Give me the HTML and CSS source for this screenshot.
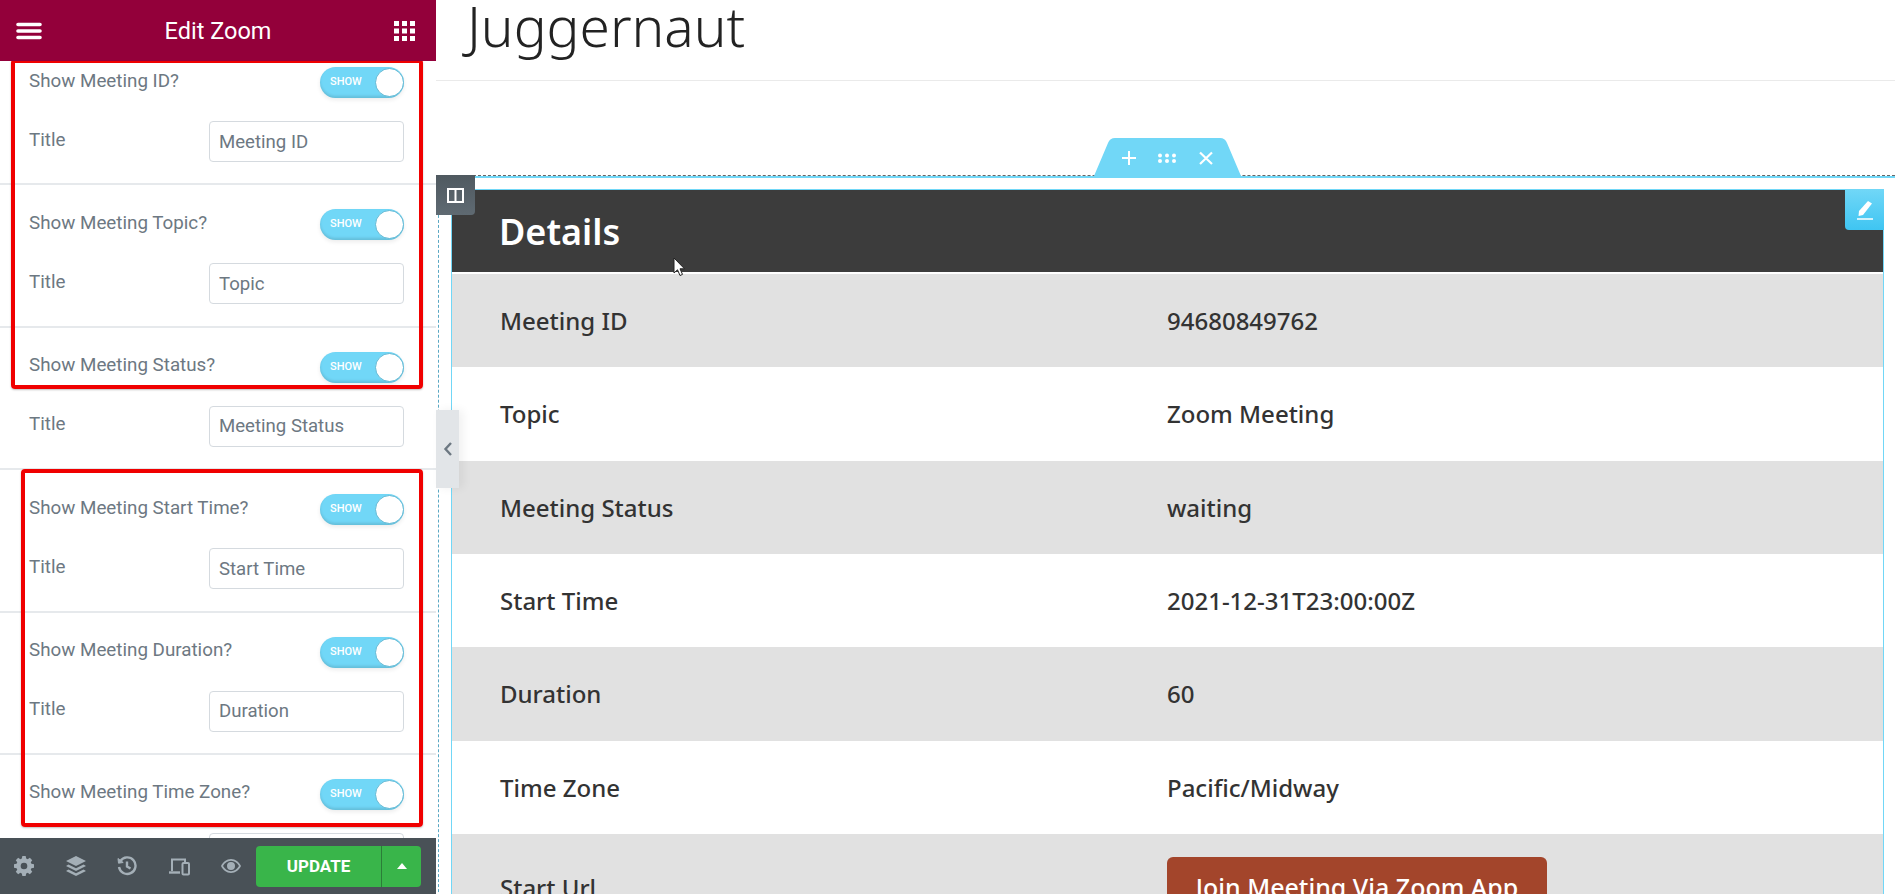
FILE: index.html
```html
<!DOCTYPE html>
<html>
<head>
  <title>Edit Zoom</title>
  <link rel="stylesheet" href="styles.css">
</head>
<body>
  <div class="app">
    <aside class="panel">
      <header class="panel-head">
        <svg class="head-icon" width="26" height="18" viewBox="0 0 26 18"><path d="M2 2.500H24M2 9H24M2 15.500H24" stroke="#fff" stroke-width="3.600" stroke-linecap="round"/></svg>
        <span class="panel-title">Edit Zoom</span>
        <svg class="head-icon" width="21" height="20" viewBox="0 0 21 20" fill="#fff"><path d="M0 0h5v5H0zM8 0h5v5H8zM16 0h5v5h-5zM0 7.500h5v5H0zM8 7.500h5v5H8zM16 7.500h5v5h-5zM0 15h5v5H0zM8 15h5v5H8zM16 15h5v5h-5z"/></svg>
      </header>

      <div class="panel-body">
        <div class="control-list">
          <section class="control">
            <div class="control-row"><span>Show Meeting ID?</span><span class="toggle">SHOW</span></div>
            <div class="control-row title-row"><span>Title</span><input class="text-input" value="Meeting ID"></div>
          </section>
          <section class="control">
            <div class="control-row"><span>Show Meeting Topic?</span><span class="toggle">SHOW</span></div>
            <div class="control-row title-row"><span>Title</span><input class="text-input" value="Topic"></div>
          </section>
          <section class="control">
            <div class="control-row"><span>Show Meeting Status?</span><span class="toggle">SHOW</span></div>
            <div class="control-row title-row"><span>Title</span><input class="text-input" value="Meeting Status"></div>
          </section>
          <section class="control">
            <div class="control-row"><span>Show Meeting Start Time?</span><span class="toggle">SHOW</span></div>
            <div class="control-row title-row"><span>Title</span><input class="text-input" value="Start Time"></div>
          </section>
          <section class="control">
            <div class="control-row"><span>Show Meeting Duration?</span><span class="toggle">SHOW</span></div>
            <div class="control-row title-row"><span>Title</span><input class="text-input" value="Duration"></div>
          </section>
          <section class="control">
            <div class="control-row"><span>Show Meeting Time Zone?</span><span class="toggle">SHOW</span></div>
            <div class="control-row title-row"><span>Title</span><input class="text-input" value=""></div>
          </section>
        </div>
        <div class="red-box red-box-one"></div>
        <div class="red-box red-box-two"></div>
      </div>

      <footer class="panel-foot">
        <div class="foot-icons">
          <svg width="20" height="20" viewBox="0 0 24 24" fill="#a4afb7"><path fill-rule="evenodd" d="M10 1h4l.6 3.100 1.800.8L19 3.100 21.900 6l-1.800 2.600.8 1.800L24 11v4l-3.100.6-.8 1.800 1.800 2.600L19 22.900l-2.600-1.800-1.800.8L14 25h-4l-.6-3.100-1.800-.8L5 22.900 2.100 20l1.800-2.600-.8-1.800L0 15v-4l3.100-.6.800-1.800L2.100 6 5 3.100l2.600 1.800 1.800-.8zM12 9a4 4 0 1 0 0 8 4 4 0 0 0 0-8z" transform="translate(0 -1)"/></svg>
          <svg width="20" height="20" viewBox="0 0 20 20" fill="#a4afb7"><path d="M10 0l10 5-10 5L0 5zM2.500 8.500L10 12.200l7.500-3.700L20 10l-10 5L0 10zM2.500 13.500L10 17.200l7.500-3.700L20 15l-10 5L0 15z"/></svg>
          <svg width="20" height="20" viewBox="0 0 20 20" fill="none" stroke="#a4afb7" stroke-width="2.400"><path d="M3.300 5A8.300 8.300 0 1 1 2 11"/><path d="M10 5.500V10.500L13.500 12.500"/><path d="M1 2.500L1.500 7.200L6.200 6.500z" fill="#a4afb7" stroke-width="1"/></svg>
          <svg width="21" height="19" viewBox="0 0 21 19" fill="none" stroke="#a4afb7" stroke-width="2"><path d="M3 14V2.500H16V5"/><path d="M0 15.500H11" stroke-width="2.400"/><rect x="13.500" y="6" width="6.500" height="11.500" rx="1"/></svg>
          <svg width="20" height="14" viewBox="0 0 20 14" fill="#a4afb7"><path fill-rule="evenodd" d="M10 0c4.500 0 8 3 10 7-2 4-5.500 7-10 7S2 11 0 7c2-4 5.500-7 10-7zM10 1.800C6.500 1.800 3.800 4 2 7c1.800 3 4.500 5.200 8 5.200S16.200 10 18 7c-1.800-3-4.500-5.200-8-5.200zM10 3a4 4 0 1 1 0 8 4 4 0 0 1 0-8z"/></svg>
        </div>
        <div class="update-group">
          <button class="update-btn">UPDATE</button>
          <button class="update-more"><span class="caret"></span></button>
        </div>
      </footer>
    </aside>

    <main class="preview">
      <div class="page-title"><h1>Juggernaut</h1></div>

      <div class="section">
        <div class="section-inner">
          <div class="widget">
            <h2 class="details-head">Details</h2>
            <div class="details-row"><span>Meeting ID</span><span>94680849762</span></div>
            <div class="details-row"><span>Topic</span><span>Zoom Meeting</span></div>
            <div class="details-row"><span>Meeting Status</span><span>waiting</span></div>
            <div class="details-row"><span>Start Time</span><span>2021-12-31T23:00:00Z</span></div>
            <div class="details-row"><span>Duration</span><span>60</span></div>
            <div class="details-row"><span>Time Zone</span><span>Pacific/Midway</span></div>
            <div class="details-row last-row"><span>Start Url</span><span><a class="join-btn">Join Meeting Via Zoom App</a></span></div>
          </div>
        </div>
      </div>

      <div class="section-tab">
        <svg class="tab-shape" width="147" height="38" viewBox="0 0 147 38"><path d="M0 38L14 5Q16 0 21 0H126Q131 0 133 5L147 38z" fill="#71d7f7"/></svg>
        <svg class="tab-icons" width="92" height="16" viewBox="0 0 92 16" stroke="#fff" stroke-width="2" fill="#fff"><path d="M1 8H15M8 1V15"/><g stroke="none"><circle cx="39" cy="5.500" r="2"/><circle cx="46" cy="5.500" r="2"/><circle cx="53" cy="5.500" r="2"/><circle cx="39" cy="11" r="2"/><circle cx="46" cy="11" r="2"/><circle cx="53" cy="11" r="2"/></g><path d="M79 2.500L91 14M91 2.500L79 14" stroke-width="2.200"/></svg>
      </div>

      <div class="column-handle">
        <svg width="17" height="15" viewBox="0 0 17 15" fill="none" stroke="#fff" stroke-width="2"><rect x="1" y="1" width="15" height="13"/><path d="M8.500 1V14"/></svg>
      </div>

      <div class="edit-handle">
        <svg width="18" height="20" viewBox="0 0 18 20" fill="#fff"><path d="M12 1L16 3.500 7 15 2.500 16 3 11z"/><path d="M1 19H17" stroke="#fff" stroke-width="1.500"/></svg>
      </div>

      <div class="collapse-tab">
        <svg width="10" height="16" viewBox="0 0 10 16" fill="none" stroke="#6d7882" stroke-width="2.400"><path d="M8 2L2.500 8L8 14"/></svg>
      </div>

      <svg class="cursor" width="13" height="20" viewBox="0 0 13 20"><path d="M1 1V16L4.500 12.800L7 18.500L9.500 17.400L7 11.800H11.500z" fill="#fff" stroke="#222" stroke-width="1"/></svg>
    </main>
  </div>
</body>
</html>
```

FILE: styles.css
```css
html, body {
  margin: 0;
  height: 100%;
  overflow: hidden;
  background: #fff;
}

.app {
  display: flex;
  height: 894px;
  overflow: hidden;
}

/* left panel */
.panel {
  width: 436px;
  flex-shrink: 0;
  display: flex;
  flex-direction: column;
  font-family: Roboto, sans-serif;
  color: #6d7882;
  background: #fff;
}

.panel-head {
  height: 61px;
  flex-shrink: 0;
  display: flex;
  align-items: center;
  justify-content: space-between;
  padding: 0 21px 0 16px;
  background: #93003a;
}

.head-icon {
  display: block;
}

.panel-title {
  color: #fff;
  font-size: 23.500px;
}

.panel-body {
  flex: 1;
  position: relative;
  overflow: hidden;
}

.control-list {
  margin-top: -18px;
}

.control {
  height: 142.4px;
  box-sizing: border-box;
  padding: 24px 32px 0 29px;
  border-bottom: 2px solid #e6e9ec;
}

.control-row {
  display: flex;
  align-items: center;
  justify-content: space-between;
  height: 31px;
  font-size: 18.800px;
}

.control-row > span:first-child {
  position: relative;
  top: -2px;
}

.title-row {
  height: 41px;
  margin-top: 23px;
}

.toggle {
  width: 84px;
  height: 31px;
  box-sizing: border-box;
  position: relative;
  display: block;
  padding-left: 10px;
  border-radius: 16px;
  background: #71d7f7;
  box-shadow: inset 0 -2px 3px rgba(0,0,0,0.12), 0 2px 4px rgba(0,0,0,0.08);
  color: #fff;
  font-size: 11px;
  font-weight: 500;
  line-height: 30px;
}

.toggle::after {
  content: "";
  position: absolute;
  top: 1px;
  right: 0;
  width: 27px;
  height: 27px;
  border: 1px solid #5fb8d4;
  border-radius: 50%;
  background: #fff;
}

.text-input {
  width: 195px;
  height: 41px;
  box-sizing: border-box;
  padding: 0 9px;
  border: 1px solid #d5dadf;
  border-radius: 4px;
  outline: none;
  background: #fff;
  color: #6d7882;
  font-family: Roboto, sans-serif;
  font-size: 18.600px;
}

.red-box {
  position: absolute;
  box-sizing: border-box;
  border: 4px solid #f00000;
  border-radius: 4px;
  box-shadow: 0 1px 2px rgba(0,0,0,0.25);
}

.red-box-one {
  left: 11px;
  top: -2px;
  width: 412px;
  height: 330px;
}

.red-box-two {
  left: 21px;
  top: 408px;
  width: 402px;
  height: 358px;
}

.panel-foot {
  height: 56px;
  flex-shrink: 0;
  display: flex;
  align-items: center;
  justify-content: space-between;
  box-sizing: border-box;
  padding: 0 15px 0 14px;
  background: #495157;
}

.foot-icons {
  width: 227px;
  display: flex;
  align-items: center;
  justify-content: space-between;
}

.foot-icons svg {
  display: block;
}

.update-group {
  display: flex;
  height: 41px;
}

.update-btn,
.update-more {
  border: 0;
  color: #fff;
  background: #39b54a;
  font-family: Roboto, sans-serif;
}

.update-btn {
  width: 126px;
  border-radius: 4px 0 0 4px;
  border-right: 1px solid #2b7d38;
  font-size: 17px;
  font-weight: 700;
}

.update-more {
  width: 39px;
  border-radius: 0 4px 4px 0;
}

.caret {
  display: block;
  width: 0;
  margin: 0 auto;
  border: 5px solid transparent;
  border-top: 0;
  border-bottom: 6px solid #fff;
}

/* page preview */
.preview {
  flex: 1;
  position: relative;
  min-width: 0;
  font-family: "Noto Sans", sans-serif;
  color: #333;
}

.page-title {
  height: 80px;
  padding-left: 31px;
  border-bottom: 1px solid #eaeaea;
  overflow: hidden;
}

.page-title h1 {
  margin: -14px 0 0;
  color: #222;
  font-size: 55px;
  font-weight: 300;
  line-height: 80px;
}

.section {
  margin: 94px 0 0 2px;
  border-top: 1px dashed #666;
  border-left: 1px dashed #5ba8c4;
}

.section-inner {
  padding: 11px 11px 0 12px;
  border-top: 2px solid #71d7f7;
}

.widget {
  border-top: 1px solid #71d7f7;
  border-left: 1px solid #71d7f7;
  border-right: 1px solid #71d7f7;
}

.details-head {
  height: 82px;
  margin: 0 0 2px;
  padding-left: 47px;
  background: #3c3c3c;
  color: #fff;
  font-size: 36px;
  font-weight: 600;
  line-height: 84px;
}

.details-row {
  display: grid;
  grid-template-columns: 667px 1fr;
  align-items: center;
  min-height: 93.33px;
  padding-left: 48px;
  box-sizing: border-box;
  font-size: 24px;
  font-weight: 500;
}

.details-row:nth-child(even) {
  background: #e1e1e1;
}

.last-row {
  padding-top: 23px;
  padding-bottom: 23px;
}

.join-btn {
  display: block;
  width: 380px;
  height: 62px;
  border-radius: 6px;
  background: #a3452b;
  color: #fff;
  font-size: 25px;
  line-height: 60px;
  text-align: center;
}

/* editor handles */
.section-tab {
  position: absolute;
  left: 658px;
  top: 138px;
  width: 147px;
  height: 38px;
}

.tab-shape {
  display: block;
}

.tab-icons {
  position: absolute;
  left: 27px;
  top: 12px;
}

.column-handle {
  position: absolute;
  left: 0;
  top: 175px;
  width: 39px;
  height: 40px;
  display: flex;
  align-items: center;
  justify-content: center;
  border-radius: 0 0 4px 0;
  background: linear-gradient(#4f5960, #5f6a72);
}

.edit-handle {
  position: absolute;
  right: 11px;
  top: 189px;
  width: 39px;
  height: 41px;
  display: flex;
  align-items: center;
  justify-content: center;
  border-radius: 0 0 0 4px;
  background: linear-gradient(#71d7f7, #3fc5f2);
}

.collapse-tab {
  position: absolute;
  left: 0;
  top: 410px;
  width: 23px;
  height: 78px;
  display: flex;
  align-items: center;
  justify-content: center;
  background: #e2e5e8;
  box-shadow: 4px 0 10px rgba(0,0,0,0.06);
}

.cursor {
  position: absolute;
  left: 237px;
  top: 257px;
}
```
